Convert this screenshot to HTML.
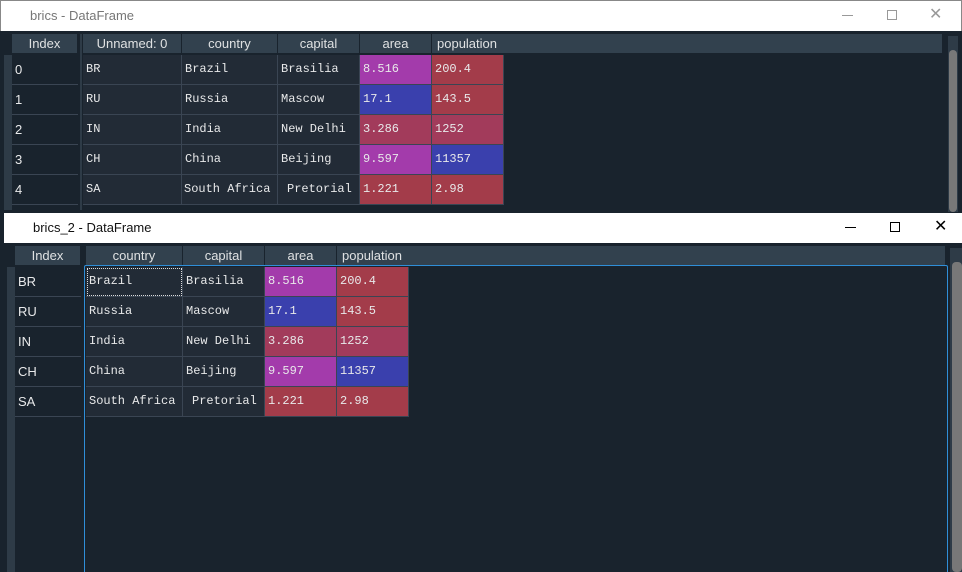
<!DOCTYPE html>
<html><head><meta charset="utf-8"><style>
*{margin:0;padding:0;box-sizing:border-box}
html,body{width:962px;height:572px;overflow:hidden}
body{background:#19232d;position:relative;font-family:"Liberation Sans",sans-serif}
.a{position:absolute}
.tb{background:#fff;color:#555;font-size:12px}
.h{position:absolute;background:#32414e;color:#dfe1e2;font-size:13px;text-align:center;line-height:19px;border-right:1px solid #19232d}
.c{position:absolute;background:#222b36;color:#e8e9ea;font-family:"Liberation Mono",monospace;font-size:12px;line-height:29px;padding-left:3px;border-right:1px solid #3a4553;border-bottom:1px solid #3a4553;white-space:pre;overflow:hidden}
.i{position:absolute;background:#19232d;color:#e8e9ea;font-size:13px;line-height:29px;padding-left:3px;border-bottom:1px solid #3a4553}
.m{background:#a33bab}.b{background:#3a40ad}.r{background:#a33c4a}.p{background:#a23b5b}
</style></head><body>
<div class="a tb" style="left:0;top:0;width:962px;height:31px;border:1px solid #888;border-bottom:none"></div>
<div class="a" style="left:30px;top:8px;font-size:13px;color:#777">brics - DataFrame</div>
<div class="a" style="left:842px;top:15px;width:11px;height:1px;background:#999"></div>
<div class="a" style="left:887px;top:10px;width:10px;height:10px;border:1px solid #999"></div>
<div class="a" style="left:929px;top:7px;font-size:16px;color:#999;line-height:16px">✕</div>
<div class="a" style="left:4px;top:55px;width:8px;height:155px;background:#2e3b47"></div>
<div class="a" style="left:80px;top:34px;width:2px;height:176px;background:#2e3b47"></div>
<div class="h" style="left:12px;top:34px;width:66px">Index</div>
<div class="h" style="left:83px;top:34px;width:99px">Unnamed: 0</div>
<div class="h" style="left:182px;top:34px;width:96px">country</div>
<div class="h" style="left:278px;top:34px;width:82px">capital</div>
<div class="h" style="left:360px;top:34px;width:72px">area</div>
<div class="h" style="left:432px;top:34px;width:511px;text-align:left;padding-left:5px">population</div>
<div class="a" style="left:948px;top:36px;width:10px;height:176px;background:#2e3b47"></div>
<div class="a" style="left:949px;top:50px;width:8px;height:162px;background:#787878;border-radius:4px"></div>

<div class="i" style="left:12px;top:55px;width:66px">0</div>
<div class="i" style="left:12px;top:85px;width:66px">1</div>
<div class="i" style="left:12px;top:115px;width:66px">2</div>
<div class="i" style="left:12px;top:145px;width:66px">3</div>
<div class="i" style="left:12px;top:175px;width:66px">4</div>

<div class="c" style="left:83px;top:55px;width:99px;height:30px">BR</div>
<div class="c" style="left:182px;top:55px;width:96px;height:30px">Brazil</div>
<div class="c" style="left:278px;top:55px;width:82px;height:30px">Brasilia</div>
<div class="c m" style="left:360px;top:55px;width:72px;height:30px">8.516</div>
<div class="c r" style="left:432px;top:55px;width:72px;height:30px">200.4</div>
<div class="c" style="left:83px;top:85px;width:99px;height:30px">RU</div>
<div class="c" style="left:182px;top:85px;width:96px;height:30px">Russia</div>
<div class="c" style="left:278px;top:85px;width:82px;height:30px">Mascow</div>
<div class="c b" style="left:360px;top:85px;width:72px;height:30px">17.1</div>
<div class="c r" style="left:432px;top:85px;width:72px;height:30px">143.5</div>
<div class="c" style="left:83px;top:115px;width:99px;height:30px">IN</div>
<div class="c" style="left:182px;top:115px;width:96px;height:30px">India</div>
<div class="c" style="left:278px;top:115px;width:82px;height:30px">New Delhi</div>
<div class="c p" style="left:360px;top:115px;width:72px;height:30px">3.286</div>
<div class="c p" style="left:432px;top:115px;width:72px;height:30px">1252</div>
<div class="c" style="left:83px;top:145px;width:99px;height:30px">CH</div>
<div class="c" style="left:182px;top:145px;width:96px;height:30px">China</div>
<div class="c" style="left:278px;top:145px;width:82px;height:30px">Beijing</div>
<div class="c m" style="left:360px;top:145px;width:72px;height:30px">9.597</div>
<div class="c b" style="left:432px;top:145px;width:72px;height:30px">11357</div>
<div class="c" style="left:83px;top:175px;width:99px;height:30px">SA</div>
<div class="c" style="left:182px;top:175px;width:96px;height:30px;padding-left:2px">South Africa</div>
<div class="c" style="left:278px;top:175px;width:82px;height:30px;padding-left:9px">Pretorial</div>
<div class="c r" style="left:360px;top:175px;width:72px;height:30px">1.221</div>
<div class="c r" style="left:432px;top:175px;width:72px;height:30px">2.98</div>

<div class="a" style="left:4px;top:213px;width:958px;height:30px;background:#fff"></div>
<div class="a" style="left:33px;top:220px;font-size:13px;color:#111">brics_2 - DataFrame</div>
<div class="a" style="left:845px;top:227px;width:11px;height:1px;background:#000"></div>
<div class="a" style="left:890px;top:222px;width:10px;height:10px;border:1px solid #000"></div>
<div class="a" style="left:934px;top:219px;font-size:16px;color:#000;line-height:16px">✕</div>
<div class="a" style="left:4px;top:243px;width:958px;height:329px;background:#19232d"></div>
<div class="a" style="left:7px;top:267px;width:8px;height:305px;background:#2e3b47"></div>
<div class="h" style="left:15px;top:246px;width:66px">Index</div>
<div class="h" style="left:86px;top:246px;width:97px">country</div>
<div class="h" style="left:183px;top:246px;width:82px">capital</div>
<div class="h" style="left:265px;top:246px;width:72px">area</div>
<div class="h" style="left:337px;top:246px;width:609px;text-align:left;padding-left:5px">population</div>
<div class="a" style="left:84px;top:265px;width:864px;height:307px;border:1px solid #2f8ed8;border-bottom:none;border-radius:2px 2px 0 0"></div>
<div class="a" style="left:950px;top:248px;width:12px;height:324px;background:#2e3b47"></div>
<div class="a" style="left:952px;top:262px;width:10px;height:310px;background:#787878;border-radius:4px"></div>

<div class="i" style="left:15px;top:267px;width:66px">BR</div>
<div class="i" style="left:15px;top:297px;width:66px">RU</div>
<div class="i" style="left:15px;top:327px;width:66px">IN</div>
<div class="i" style="left:15px;top:357px;width:66px">CH</div>
<div class="i" style="left:15px;top:387px;width:66px">SA</div>

<div class="c" style="left:86px;top:267px;width:97px;height:30px;outline:1px dotted #ddd;outline-offset:-2px">Brazil</div>
<div class="c" style="left:183px;top:267px;width:82px;height:30px">Brasilia</div>
<div class="c m" style="left:265px;top:267px;width:72px;height:30px">8.516</div>
<div class="c r" style="left:337px;top:267px;width:72px;height:30px">200.4</div>
<div class="c" style="left:86px;top:297px;width:97px;height:30px">Russia</div>
<div class="c" style="left:183px;top:297px;width:82px;height:30px">Mascow</div>
<div class="c b" style="left:265px;top:297px;width:72px;height:30px">17.1</div>
<div class="c r" style="left:337px;top:297px;width:72px;height:30px">143.5</div>
<div class="c" style="left:86px;top:327px;width:97px;height:30px">India</div>
<div class="c" style="left:183px;top:327px;width:82px;height:30px">New Delhi</div>
<div class="c p" style="left:265px;top:327px;width:72px;height:30px">3.286</div>
<div class="c p" style="left:337px;top:327px;width:72px;height:30px">1252</div>
<div class="c" style="left:86px;top:357px;width:97px;height:30px">China</div>
<div class="c" style="left:183px;top:357px;width:82px;height:30px">Beijing</div>
<div class="c m" style="left:265px;top:357px;width:72px;height:30px">9.597</div>
<div class="c b" style="left:337px;top:357px;width:72px;height:30px">11357</div>
<div class="c" style="left:86px;top:387px;width:97px;height:30px">South Africa</div>
<div class="c" style="left:183px;top:387px;width:82px;height:30px;padding-left:9px">Pretorial</div>
<div class="c r" style="left:265px;top:387px;width:72px;height:30px">1.221</div>
<div class="c r" style="left:337px;top:387px;width:72px;height:30px">2.98</div>
</body></html>
